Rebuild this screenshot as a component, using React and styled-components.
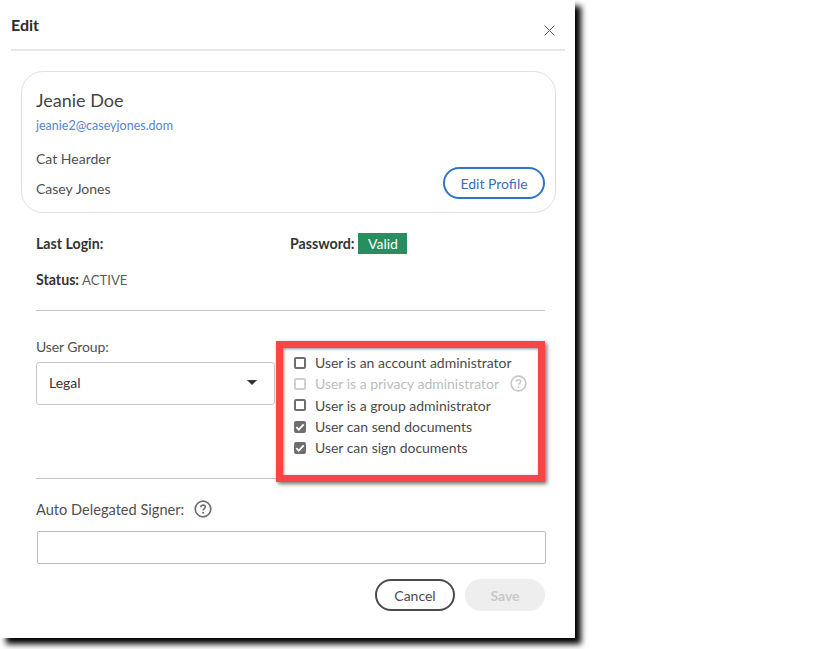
import React from 'react';
import styled, { createGlobalStyle } from 'styled-components';

const options = [
  { label: 'User is an account administrator' },
  { label: 'User is a privacy administrator', disabled: true, help: true },
  { label: 'User is a group administrator' },
  { label: 'User can send documents', checked: true },
  { label: 'User can sign documents', checked: true },
];

const HelpIcon = ({ size = 18, color = '#6e6e6e' }) => (
  <HelpSvg width={size} height={size} viewBox="0 0 18 18">
    <circle cx="9" cy="9" r="7.8" fill="none" stroke={color} strokeWidth="1.7" />
    <path d="M6.8 7.2c0-1.3 1-2.1 2.3-2.1s2.2.8 2.2 1.9c0 1.8-2.2 1.8-2.2 3.4" fill="none" stroke={color} strokeWidth="1.6" />
    <circle cx="9.1" cy="12.8" r="1" fill={color} />
  </HelpSvg>
);

const App = () => {
  return (
    <>
      <GlobalStyle />
      <Page>
        <Panel>
          <Header>
            <Title>Edit</Title>
            <CloseButton>
              <svg width="11" height="11" viewBox="0 0 11 11">
                <path d="M.5.5l10 10M10.5.5l-10 10" stroke="#555" strokeWidth="1" fill="none" />
              </svg>
            </CloseButton>
          </Header>

          <ProfileCard>
            <Name>Jeanie Doe</Name>
            <Email>jeanie2@caseyjones.dom</Email>
            <ProfileLine>Cat Hearder</ProfileLine>
            <ProfileLine>Casey Jones</ProfileLine>
            <EditProfile>Edit Profile</EditProfile>
          </ProfileCard>

          <InfoSection>
            <InfoRow>
              <InfoCell><Strong>Last Login:</Strong></InfoCell>
              <InfoCell>
                <Strong>Password:</Strong>
                <Badge>Valid</Badge>
              </InfoCell>
            </InfoRow>
            <StatusRow>
              <Strong>Status:</Strong> ACTIVE
            </StatusRow>
          </InfoSection>

          <Divider />

          <GroupRow>
            <GroupColumn>
              <FieldLabel>User Group:</FieldLabel>
              <Select>
                Legal
                <Caret />
              </Select>
            </GroupColumn>
            <Highlight>
              {options.map((option) => (
                <OptionRow key={option.label} $disabled={option.disabled}>
                  <CheckBox $checked={option.checked} $disabled={option.disabled}>
                    {option.checked && (
                      <svg width="10" height="10" viewBox="0 0 10 10">
                        <path d="M1.3 5.2l2.5 2.5 4.9-5.4" fill="none" stroke="#fff" strokeWidth="1.8" />
                      </svg>
                    )}
                  </CheckBox>
                  {option.label}
                  {option.help && <OptionHelp><HelpIcon size={17} color="#c6c6c6" /></OptionHelp>}
                </OptionRow>
              ))}
            </Highlight>
          </GroupRow>

          <Divider />

          <SignerSection>
            <SignerLabel>
              Auto Delegated Signer:
              <HelpIcon />
            </SignerLabel>
            <TextInput />
          </SignerSection>

          <Footer>
            <CancelButton>Cancel</CancelButton>
            <SaveButton>Save</SaveButton>
          </Footer>
        </Panel>
      </Page>
    </>
  );
};

const GlobalStyle = createGlobalStyle`
  body {
    margin: 0;
    background: #fff;
    font-family: 'Lato', 'Open Sans', sans-serif;
    font-size: 14px;
    color: #4b4b4b;
  }
`;

const Page = styled.div`
  width: 830px;
  height: 649px;
  overflow: hidden;
`;

const Panel = styled.div`
  width: 575px;
  height: 638px;
  box-sizing: border-box;
  background: #fff;
  box-shadow: 6px 6px 6px #000;
  padding: 0 10px 0 11px;
`;

const Header = styled.header`
  height: 51px;
  box-sizing: border-box;
  border-bottom: 2px solid #e8e8e8;
  display: flex;
  justify-content: space-between;
  align-items: flex-start;
`;

const Title = styled.h1`
  margin: 15px 0 0;
  font-size: 16px;
  line-height: 20px;
  font-weight: 700;
  color: #2c2c2c;
`;

const CloseButton = styled.div`
  margin: 25px 10px 0 0;
  line-height: 0;
`;

const ProfileCard = styled.section`
  position: relative;
  box-sizing: border-box;
  width: 535px;
  height: 142px;
  margin: 20px 0 0 10px;
  padding: 16px 14px 0;
  border: 1px solid #e1e1e1;
  border-radius: 22px;
`;

const Name = styled.div`
  font-size: 18px;
  line-height: 24px;
  color: #444;
`;

const Email = styled.div`
  margin-top: 5px;
  font-size: 12.5px;
  line-height: 18px;
  color: #5a84c8;
`;

const ProfileLine = styled.div`
  margin-top: 15px;
  font-size: 14px;
  line-height: 18px;
  color: #505050;

  & + & {
    margin-top: 12px;
  }
`;

const EditProfile = styled.button`
  position: absolute;
  right: 10px;
  bottom: 13px;
  width: 102px;
  height: 32px;
  padding: 0;
  background: #fff;
  border: 2px solid #3273c8;
  border-radius: 16px;
  font-family: inherit;
  font-size: 14px;
  color: #3a6fbd;
`;

const InfoSection = styled.div`
  margin: 20px 0 0 25px;
`;

const InfoRow = styled.div`
  display: grid;
  grid-template-columns: 254px 1fr;
  height: 21px;
`;

const InfoCell = styled.div`
  display: flex;
  align-items: center;
`;

const Strong = styled.strong`
  font-weight: 700;
  color: #333;
  font-size: 14.2px;
`;

const Badge = styled.span`
  margin-left: 4px;
  width: 49px;
  height: 21px;
  background: #268e5f;
  color: #fff;
  font-size: 14px;
  line-height: 21px;
  text-align: center;
`;

const StatusRow = styled.div`
  margin-top: 16px;
  line-height: 20px;
  font-size: 13.2px;
  color: #5c5c5c;
`;

const Divider = styled.hr`
  margin: 20px 20px 0 25px;
  height: 1px;
  border: 0;
  background: #c4c4c4;
`;

const GroupRow = styled.div`
  display: flex;
  align-items: flex-start;
  height: 147px;
  margin-left: 25px;
`;

const GroupColumn = styled.div`
  width: 239px;
  padding-top: 27px;
`;

const FieldLabel = styled.div`
  font-size: 14px;
  letter-spacing: -0.1px;
  line-height: 18px;
  color: #505050;
  margin-bottom: 6px;
`;

const Select = styled.div`
  box-sizing: border-box;
  height: 43px;
  display: flex;
  align-items: center;
  justify-content: space-between;
  padding: 0 17px 2px 12px;
  border: 1px solid #c8c8c8;
  border-radius: 3px;
  font-size: 14px;
  color: #333;
`;

const Caret = styled.span`
  width: 0;
  height: 0;
  border-left: 5px solid transparent;
  border-right: 5px solid transparent;
  border-top: 5px solid #333;
`;

const Highlight = styled.div`
  position: relative;
  z-index: 1;
  box-sizing: border-box;
  flex: none;
  width: 269px;
  height: 141px;
  margin: 30px 0 0 1px;
  padding: 4px 0 0 11px;
  background: #fff;
  border: 7px solid #fb4444;
  box-shadow: 2px 2px 4px rgba(0, 0, 0, 0.55), inset 1px 1px 3px rgba(0, 0, 0, 0.45);
`;

const OptionRow = styled.div`
  display: flex;
  align-items: center;
  height: 21.3px;
  font-size: 14px;
  letter-spacing: -0.02px;
  color: ${(props) => (props.$disabled ? '#bdbdbd' : '#4b4b4b')};
`;

const CheckBox = styled.span`
  box-sizing: border-box;
  width: 12px;
  height: 12px;
  margin-right: 9px;
  display: flex;
  align-items: center;
  justify-content: center;
  border-radius: 2px;
  border: 2px solid ${(props) => (props.$disabled ? '#cfcfcf' : '#6e6e6e')};
  background: ${(props) => (props.$checked ? '#6e6e6e' : '#fff')};

  svg {
    flex: none;
  }
`;

const OptionHelp = styled.span`
  margin-left: 11px;
  line-height: 0;
`;

const HelpSvg = styled.svg`
  display: block;
  flex: none;
`;

const SignerSection = styled.div`
  margin: 21px 19px 0 25px;
`;

const SignerLabel = styled.div`
  display: flex;
  align-items: center;
  gap: 10px;
  height: 18px;
  font-size: 14.6px;
  color: #505050;
`;

const TextInput = styled.div`
  box-sizing: border-box;
  height: 33px;
  margin: 13px 0 0 1px;
  border: 1px solid #bcbcbc;
  border-radius: 2px;
`;

const Footer = styled.div`
  display: flex;
  justify-content: flex-end;
  gap: 10px;
  margin: 15px 20px 0 0;
`;

const CancelButton = styled.button`
  width: 80px;
  height: 32px;
  padding: 0;
  background: #fff;
  border: 2px solid #4b4b4b;
  border-radius: 16px;
  font-family: inherit;
  font-size: 14px;
  color: #4b4b4b;
`;

const SaveButton = styled.button`
  width: 80px;
  height: 32px;
  padding: 0;
  background: #eeeeee;
  border: 0;
  border-radius: 16px;
  font-family: inherit;
  font-size: 14px;
  font-weight: 700;
  color: #c9c9c9;
`;

export default App;
